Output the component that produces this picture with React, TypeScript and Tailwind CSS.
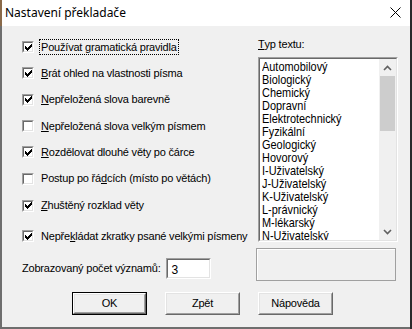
import React from "react";

const CHECK_PIX: [number, number][] = [
  [6, 0],
  [5, 1], [6, 1],
  [0, 2], [4, 2], [5, 2], [6, 2],
  [0, 3], [1, 3], [3, 3], [4, 3], [5, 3],
  [0, 4], [1, 4], [2, 4], [3, 4], [4, 4],
  [1, 5], [2, 5], [3, 5],
  [2, 6],
];

function CheckBox({ checked }: { checked: boolean }) {
  return (
    <div className="w-[12px] h-[12px] shrink-0 border border-t-[#a0a0a0] border-l-[#a0a0a0] border-r-white border-b-white">
      <div className="w-full h-full border border-t-[#696969] border-l-[#696969] border-r-[#e3e3e3] border-b-[#e3e3e3] bg-white flex items-center justify-center">
        {checked && (
          <svg width="7" height="7" viewBox="0 0 7 7" shapeRendering="crispEdges">
            {CHECK_PIX.map(([x, y]) => (
              <rect key={`${x}-${y}`} x={x} y={y} width="1" height="1" fill="#000" />
            ))}
          </svg>
        )}
      </div>
    </div>
  );
}

function Row({
  checked,
  focus,
  h,
  children,
}: {
  checked: boolean;
  focus?: boolean;
  h: string;
  children: React.ReactNode;
}) {
  return (
    <div className={`flex items-center ${h}`}>
      <CheckBox checked={checked} />
      <div
        className={`ml-[5px] h-[16px] px-[1px] flex items-center whitespace-nowrap border ${
          focus ? "border-dotted border-black" : "border-transparent"
        }`}
      >
        {children}
      </div>
    </div>
  );
}

function U({ children }: { children: React.ReactNode }) {
  return <span className="underline underline-offset-[1px]">{children}</span>;
}

function Button({ children, isDefault }: { children: React.ReactNode; isDefault?: boolean }) {
  const inner = (
    <div className="w-full h-full border border-t-white border-l-white border-r-[#696969] border-b-[#696969]">
      <div className="w-full h-full border border-t-[#e3e3e3] border-l-[#e3e3e3] border-r-[#a0a0a0] border-b-[#a0a0a0] bg-[#f0f0f0] flex items-center justify-center">
        {children}
      </div>
    </div>
  );
  return (
    <div className={`w-[75px] h-[23px] ${isDefault ? "border border-black" : ""}`}>{inner}</div>
  );
}

const items = [
  "Automobilový",
  "Biologický",
  "Chemický",
  "Dopravní",
  "Elektrotechnický",
  "Fyzikální",
  "Geologický",
  "Hovorový",
  "I-Uživatelský",
  "J-Uživatelský",
  "K-Uživatelský",
  "L-právnický",
  "M-lékarský",
  "N-Uživatelský",
];

export default function App() {
  return (
    <div
      className="w-[412px] h-[329px] flex bg-[#2a2a2a] overflow-hidden text-black"
      style={{ fontFamily: '"Liberation Sans", Arial, sans-serif' }}
    >
      <div className="w-[410px] h-[329px] flex flex-col">
        {/* title bar */}
        <div className="h-[26px] bg-white flex items-center border-l-2 border-[#8a6a4a] pl-[3px] pr-[9px]">
          <span
            className="text-[12px] flex-1"
            style={{ fontFamily: '"Noto Sans", "Liberation Sans", sans-serif' }}
          >
            Nastavení překladače
          </span>
          <svg width="11" height="11" viewBox="0 0 11 11" className="mb-[1px]">
            <path d="M0.5 0.5 L10.5 10.5 M10.5 0.5 L0.5 10.5" stroke="#000" strokeWidth="1" />
          </svg>
        </div>

        {/* body */}
        <div className="flex-1 bg-[#f0f0f0] border-l-2 border-b-2 border-[#6e6e6e] flex flex-col text-[11px] tracking-[-0.2px]">
          <div className="flex h-[258px]">
            {/* left column */}
            <div className="ml-[20px] w-[234px] pt-[8px] flex flex-col">
              <Row checked focus h="h-[26px]">
                Používat gramatická pravidla
              </Row>
              <Row checked h="h-[26px]">
                <U>B</U>rát ohled na vlastnosti písma
              </Row>
              <Row checked h="h-[27px]">
                <U>N</U>epřeložená slova barevně
              </Row>
              <Row checked={false} h="h-[26px]">
                <U>N</U>epřeložená slova velkým písmem
              </Row>
              <Row checked h="h-[26px]">
                <U>R</U>ozdělovat dlouhé věty po čárce
              </Row>
              <Row checked={false} h="h-[27px]">
                Postup po řá<U>d</U>cích (místo po větách)
              </Row>
              <Row checked h="h-[27px]">
                <U>Z</U>huštěný rozklad věty
              </Row>
              <div className="mt-[4px]">
                <Row checked h="h-[26px]">
                  Nepře<U>k</U>ládat zkratky psané velkými písmeny
                </Row>
              </div>
              <div className="mt-[9px] flex items-center h-[21px]">
                <span className="whitespace-nowrap">Zobrazovaný počet významů:</span>
                <div className="ml-[6px] w-[45px] h-[21px] border border-t-[#a0a0a0] border-l-[#a0a0a0] border-r-white border-b-white">
                  <div className="w-full h-full border border-t-[#696969] border-l-[#696969] border-r-[#e3e3e3] border-b-[#e3e3e3] bg-white pl-[3px] flex items-start pt-[1px] text-[12px]">
                    3
                  </div>
                </div>
              </div>
            </div>

            {/* right column */}
            <div className="flex flex-col pt-[11px]">
              <div className="ml-[2px] h-[14px] flex items-center whitespace-nowrap">
                <U>T</U>yp textu:
              </div>
              <div className="ml-[2px] mt-[6px] w-[140px] h-[185px] border border-t-[#a0a0a0] border-l-[#a0a0a0] border-r-white border-b-white">
                <div className="w-full h-full border border-t-[#696969] border-l-[#696969] border-r-[#e3e3e3] border-b-[#e3e3e3] bg-white flex">
                  <div className="flex-1 overflow-hidden pl-[2px] pt-[1px]">
                    <div className="origin-top-left scale-x-[0.84] text-[13px] leading-[13px] tracking-normal">
                      {items.map((it) => (
                        <div key={it} className="h-[13px] whitespace-nowrap">
                          {it}
                        </div>
                      ))}
                    </div>
                  </div>
                  <div className="w-[17px] h-full bg-[#f0f0f0] flex flex-col">
                    <div className="h-[17px] flex items-center justify-center">
                      <svg width="9" height="6" viewBox="0 0 9 6">
                        <path d="M1 5 L4.5 1.5 L8 5" stroke="#606060" strokeWidth="1.6" fill="none" />
                      </svg>
                    </div>
                    <div className="h-[55px] mx-[1px] bg-[#cdcdcd]" />
                    <div className="flex-1" />
                    <div className="h-[17px] flex items-center justify-center">
                      <svg width="9" height="6" viewBox="0 0 9 6">
                        <path d="M1 1 L4.5 4.5 L8 1" stroke="#606060" strokeWidth="1.6" fill="none" />
                      </svg>
                    </div>
                  </div>
                </div>
              </div>
              <div className="mt-[6px] w-[140px] h-[33px] border border-[#a0a0a0]">
                <div className="w-full h-full border-t border-l border-white" />
              </div>
            </div>
          </div>

          {/* buttons */}
          <div className="mt-[8px] ml-[70px] flex gap-[18px]">
            <Button isDefault>OK</Button>
            <Button>Zpět</Button>
            <Button>Nápověda</Button>
          </div>
        </div>
      </div>
    </div>
  );
}
